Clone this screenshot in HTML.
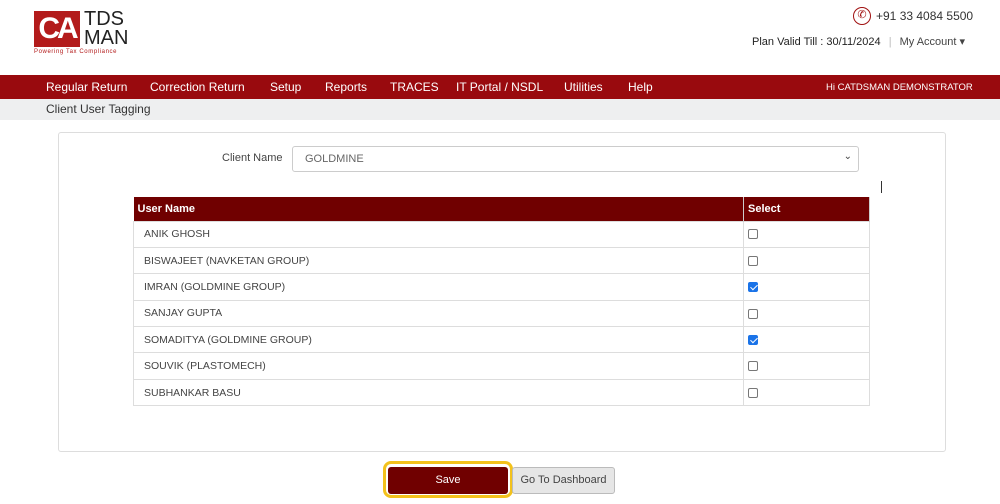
<!DOCTYPE html>
<html><head><meta charset="utf-8"><style>
*{margin:0;padding:0;box-sizing:border-box}
body{width:1000px;height:504px;background:#fff;font-family:"Liberation Sans",sans-serif;color:#333;position:relative;overflow:hidden}
.a{position:absolute;white-space:nowrap}
.nav{position:absolute;left:0;top:75px;width:1000px;height:24px;background:#990a0e}
.nav span{position:absolute;top:5px;color:#fff;font-size:12px}
.crumb{position:absolute;left:0;top:99px;width:1000px;height:21px;background:#eeeff0}
.panel{position:absolute;left:58px;top:132px;width:888px;height:320px;border:1px solid #ddd;border-radius:3px}
table{position:absolute;left:133px;top:197px;width:737px;border-collapse:collapse;font-size:10.5px}
th{background:#700000;color:#fff;text-align:left;height:24px;padding-left:4px;font-size:11px;border-right:1px solid #ccc}
td{height:26.4px;border:1px solid #ddd;padding-left:10px;color:#444}
td.c{padding-left:4px}
.cb{display:inline-block;width:10px;height:10px;border:1px solid #777;border-radius:2px;vertical-align:middle}
.ck{background:#1a73e8;border-color:#1a73e8;position:relative}
.ck:after{content:"";position:absolute;left:2.5px;top:0px;width:3px;height:6px;border:solid #fff;border-width:0 1.5px 1.5px 0;transform:rotate(45deg)}
</style></head><body>
<div class="a" style="left:34px;top:11px;width:46px;height:36px;background:#b31b1b;color:#fff;font-size:30px;font-weight:bold;line-height:36px;text-align:center;letter-spacing:-3px">CA</div>
<div class="a" style="left:84px;top:10px;font-size:20px;line-height:19px;color:#222">TDS<br>MAN</div>
<div class="a" style="left:34px;top:49px;font-size:6px;color:#b31b1b;letter-spacing:0.6px">Powering Tax Compliance</div>
<div class="a" style="left:853px;top:7px;width:18px;height:18px;border:1.5px solid #a01010;border-radius:50%;color:#a01010;font-size:11px;text-align:center;line-height:15px">✆</div>
<div class="a" style="left:876px;top:9px;font-size:12px;color:#333">+91 33 4084 5500</div>
<div class="a" style="left:752px;top:35px;font-size:11px;color:#222">Plan Valid Till : 30/11/2024 <span style="color:#bbb;margin:0 5px">|</span> <span style="color:#444">My Account ▾</span></div>
<div class="nav">
<span style="left:46px">Regular Return</span><span style="left:150px">Correction Return</span><span style="left:270px">Setup</span><span style="left:325px">Reports</span><span style="left:390px">TRACES</span><span style="left:456px">IT Portal / NSDL</span><span style="left:564px">Utilities</span><span style="left:628px">Help</span>
<span style="left:826px;top:7px;font-size:9.5px">Hi CATDSMAN DEMONSTRATOR</span>
</div>
<div class="crumb"><span class="a" style="left:46px;top:3px;font-size:12px;color:#333">Client User Tagging</span></div>
<div class="panel"></div>
<div class="a" style="left:222px;top:152px;font-size:11px;color:#444">Client Name</div>
<div class="a" style="left:292px;top:146px;width:567px;height:26px;border:1px solid #ccc;border-radius:3px;font-size:11px;color:#666;padding:6px 12px">GOLDMINE<span style="position:absolute;right:6px;top:4px;font-size:10px;color:#444">⌄</span></div>
<div class="a" style="left:881px;top:181px;width:1px;height:12px;background:#333"></div>
<table>
<tr><th style="width:610px">User Name</th><th>Select</th></tr>
<tr><td>ANIK GHOSH</td><td class="c"><span class="cb"></span></td></tr>
<tr><td>BISWAJEET (NAVKETAN GROUP)</td><td class="c"><span class="cb"></span></td></tr>
<tr><td>IMRAN (GOLDMINE GROUP)</td><td class="c"><span class="cb ck"></span></td></tr>
<tr><td>SANJAY GUPTA</td><td class="c"><span class="cb"></span></td></tr>
<tr><td>SOMADITYA (GOLDMINE GROUP)</td><td class="c"><span class="cb ck"></span></td></tr>
<tr><td>SOUVIK (PLASTOMECH)</td><td class="c"><span class="cb"></span></td></tr>
<tr><td>SUBHANKAR BASU</td><td class="c"><span class="cb"></span></td></tr>
</table>
<div class="a" style="left:383px;top:461px;width:130px;height:37px;border:3px solid #f3c21c;border-radius:8px"></div>
<div class="a" style="left:388px;top:467px;width:120px;height:27px;background:#700000;color:#fff;font-size:11px;text-align:center;line-height:27px;border-radius:3px">Save</div>
<div class="a" style="left:512px;top:467px;width:103px;height:27px;background:#e6e6e6;border:1px solid #bbb;color:#444;font-size:11px;text-align:center;line-height:25px;border-radius:3px">Go To Dashboard</div>
</body></html>
